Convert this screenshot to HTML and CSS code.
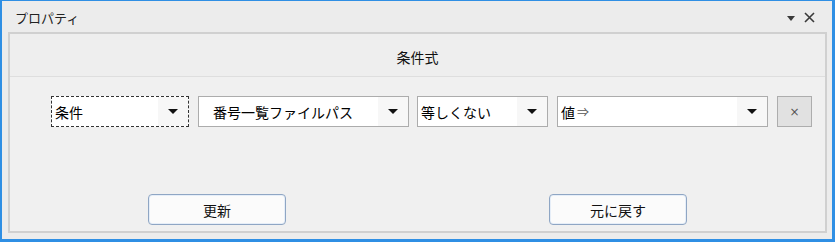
FILE: index.html
```html
<!DOCTYPE html>
<html>

<head>
    <title>プロパティ</title>
    <meta charset="utf-8">
    <link rel="stylesheet" href="styles.css">
</head>

<body>
    <div class="window">
        <div class="titlebar">
            <span class="title">プロパティ</span>
            <div class="title-tools">
                <span class="tool-arrow"></span>
                <svg class="tool-close" width="11" height="11" viewBox="0 0 11 11">
                    <path d="M1 1 L10 10 M10 1 L1 10" stroke="#3a3a3a" stroke-width="1.6" fill="none"/>
                </svg>
            </div>
        </div>

        <div class="panel">
            <div class="panel-header">条件式</div>

            <div class="cond-row">
                <div class="combo combo-focus w-cond">
                    <span class="combo-text">条件</span>
                    <span class="combo-btn"><span class="arrow"></span></span>
                </div>
                <div class="combo w-field">
                    <span class="combo-text indent">番号一覧ファイルパス</span>
                    <span class="combo-btn"><span class="arrow"></span></span>
                </div>
                <div class="combo w-op">
                    <span class="combo-text">等しくない</span>
                    <span class="combo-btn"><span class="arrow"></span></span>
                </div>
                <div class="combo w-value">
                    <span class="combo-text">値<span class="sym">⇒</span></span>
                    <span class="combo-btn"><span class="arrow"></span></span>
                </div>
                <button type="button" class="remove-btn">×</button>
            </div>

            <div class="button-group">
                <button type="button" class="action-btn">更新</button>
                <button type="button" class="action-btn">元に戻す</button>
            </div>
        </div>
    </div>
</body>
</html>
```

FILE: styles.css
```css
* {
    box-sizing: border-box;
}

body {
    margin: 0;
    background-color: #ffffff;
    font-family: "Noto Sans CJK JP", "Noto Sans", sans-serif;
}

.window {
    width: 835px;
    height: 242px;
    background-color: #ececec;
    border-style: solid;
    border-color: #2f8fe4;
    border-width: 1px 3px 3px 2px;
}

/* Title bar */
.titlebar {
    height: 31px;
    display: flex;
    align-items: center;
    justify-content: space-between;
    padding: 2px 17px 0 13px;
}

.title {
    font-size: 13px;
    color: #222222;
}

.title-tools {
    display: flex;
    align-items: center;
    gap: 9px;
}

.tool-arrow {
    width: 0;
    height: 0;
    border-left: 4px solid transparent;
    border-right: 4px solid transparent;
    border-top: 5px solid #3a3a3a;
    margin-top: 1px;
}

/* Main panel */
.panel {
    margin: 0 5px 0 6px;
    height: 201px;
    background-color: #f0f0f0;
    border: 2px solid #d0d0d0;
}

.panel-header {
    height: 43px;
    border-bottom: 1px solid #dedede;
    background-color: #eeeeee;
    display: flex;
    align-items: center;
    justify-content: center;
    font-size: 14px;
    color: #111111;
    padding-top: 3px;
}

.cond-row {
    display: flex;
    align-items: center;
    gap: 9px;
    padding-left: 41px;
    margin-top: 19px;
}

.combo {
    height: 31px;
    display: flex;
    background-color: #ffffff;
    border: 1px solid #acacac;
}

.combo-focus {
    border: 1px dashed #333333;
}

.w-cond {
    width: 138px;
}

.w-field {
    width: 211px;
}

.w-op {
    width: 131px;
    margin-left: -1px;
}

.w-value {
    width: 211px;
}

.combo-text {
    flex: 1;
    display: flex;
    align-items: center;
    padding-left: 3px;
    font-size: 14px;
    color: #000000;
    white-space: nowrap;
}

.combo-text.indent {
    padding-left: 14px;
}

.sym {
    color: #555555;
    font-size: 12px;
    margin-left: 2px;
}

.combo-btn {
    width: 30px;
    display: flex;
    align-items: center;
    justify-content: center;
    background-color: #f7f7f7;
}

.arrow {
    width: 0;
    height: 0;
    border-left: 5px solid transparent;
    border-right: 5px solid transparent;
    border-top: 5px solid #111111;
}

.remove-btn {
    width: 35px;
    height: 31px;
    background-color: #e1e1e1;
    border: 1px solid #adadad;
    color: #555555;
    font-size: 12px;
    font-family: "DejaVu Sans", sans-serif;
    padding: 0;
}

/* Bottom buttons */
.button-group {
    display: flex;
    gap: 263px;
    padding-left: 138px;
    margin-top: 67px;
}

.action-btn {
    width: 138px;
    height: 31px;
    background-color: #fbfbfb;
    border: 1px solid #8fa6c4;
    border-radius: 4px;
    box-shadow: inset 0 0 0 1px #e6eef8;
    font-size: 14px;
    font-family: "Noto Sans CJK JP", sans-serif;
    color: #111111;
    padding: 0;
}
```
